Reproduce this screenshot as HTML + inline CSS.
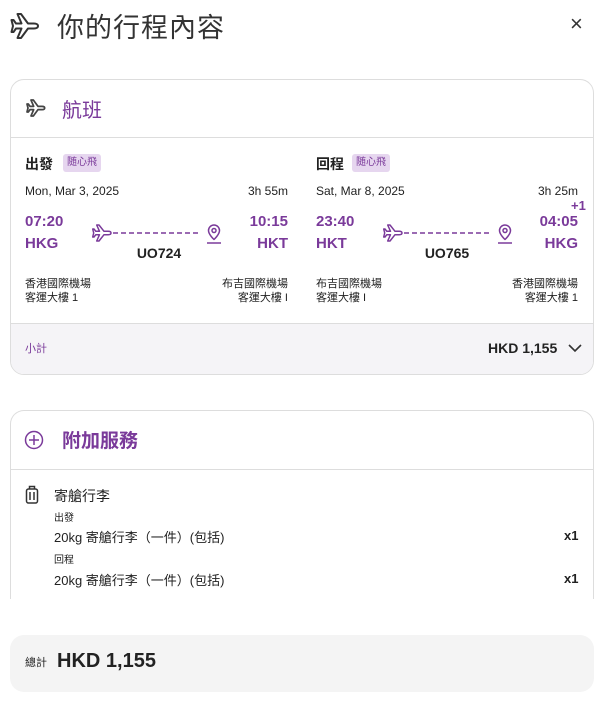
<!DOCTYPE html>
<html><head><meta charset="utf-8"><style>
*{margin:0;padding:0;box-sizing:border-box}
body{width:600px;height:706px;background:#fff;font-family:"Liberation Sans","Noto Sans CJK TC",sans-serif;color:#222;position:relative;overflow:hidden}
.a{position:absolute;white-space:nowrap}
.p{color:#7a3a9a}
.b{font-weight:bold}
.card{position:absolute;left:10px;width:584px;border:1px solid #ddd;border-radius:14px;background:#fff;overflow:hidden}
.badge{position:absolute;background:#e6d6ef;color:#7a3a9a;font-size:10px;border-radius:3px;padding:2px 4px;line-height:14px}
.sm{font-size:11px;line-height:14px}
</style></head><body>
<svg class="a" style="left:9px;top:11px" width="32" height="30" viewBox="0 0 32 30" fill="none" stroke="#333" stroke-width="2" stroke-linejoin="round"><path d="M29 15c0-1.5-1.5-2.5-4-2.5H19L12 3H8.5l4 9.5H7L4.5 9H2.5l1.5 6-1.5 6h2L7 17.5h5.5l-4 9.5H12l7-9.5h6c2.5 0 4-1 4-2.5z"/></svg>
<div class="a" style="left:57px;top:6px;font-size:27px;color:#333;letter-spacing:1px">你的行程內容</div>
<div class="a" style="left:570px;top:11px;font-size:22px;color:#333">×</div>

<div class="card" style="top:79px;height:296px">
  <svg class="a" style="left:14px;top:18px" width="22" height="20" viewBox="0 0 32 30" fill="none" stroke="#444" stroke-width="2.6" stroke-linejoin="round"><path d="M29 15c0-1.5-1.5-2.5-4-2.5H19L12 3H8.5l4 9.5H7L4.5 9H2.5l1.5 6-1.5 6h2L7 17.5h5.5l-4 9.5H12l7-9.5h6c2.5 0 4-1 4-2.5z"/></svg>
  <div class="a p" style="left:51px;top:14px;font-size:20px">航班</div>
  <div class="a" style="left:0;top:57px;width:584px;border-top:1px solid #ddd"></div>

  <div class="a b" style="left:14px;top:74px;font-size:14px">出發</div>
  <div class="badge" style="left:52px;top:74px">随心飛</div>
  <div class="a" style="left:14px;top:104px;font-size:12px">Mon, Mar 3, 2025</div>
  <div class="a" style="left:200px;width:77px;text-align:right;top:104px;font-size:12px">3h 55m</div>
  <div class="a p b" style="left:14px;top:133px;font-size:15px">07:20</div>
  <div class="a p b" style="left:14px;top:155px;font-size:15px">HKG</div>
  <div class="a p b" style="left:200px;width:77px;text-align:right;top:133px;font-size:15px">10:15</div>
  <div class="a p b" style="left:200px;width:77px;text-align:right;top:155px;font-size:15px">HKT</div>
  <svg class="a" style="left:80px;top:142px" width="132" height="24" viewBox="0 0 132 24" fill="none" stroke="#7a3a9a" stroke-width="1.5" stroke-linejoin="round"><path d="M20 11c0-1-1-1.7-2.8-1.7H13L8 3H5.7l2.8 6.3H4.8L3 7H1.7l1 4-1 4H3l1.8-2.3h3.7L5.7 19H8l5-6.3h4.2c1.8 0 2.8-.7 2.8-1.7z"/><path d="M22 11h86" stroke-dasharray="5 3"/><path d="M123 3a5.5 5.5 0 0 1 5.5 5.5c0 4-5.5 9-5.5 9s-5.5-5-5.5-9A5.5 5.5 0 0 1 123 3z"/><circle cx="123" cy="8.5" r="2"/><path d="M116 21h14"/></svg>
  <div class="a b" style="left:100px;width:96px;text-align:center;top:165px;font-size:14px">UO724</div>
  <div class="a sm" style="left:14px;top:197px">香港國際機場</div>
  <div class="a sm" style="left:14px;top:211px">客運大樓 1</div>
  <div class="a sm" style="left:180px;width:97px;text-align:right;top:197px">布吉國際機場</div>
  <div class="a sm" style="left:180px;width:97px;text-align:right;top:211px">客運大樓 I</div>

  <div class="a b" style="left:305px;top:74px;font-size:14px">回程</div>
  <div class="badge" style="left:341px;top:74px">随心飛</div>
  <div class="a" style="left:305px;top:104px;font-size:12px">Sat, Mar 8, 2025</div>
  <div class="a" style="left:490px;width:77px;text-align:right;top:104px;font-size:12px">3h 25m</div>
  <div class="a p b" style="left:560px;top:118px;font-size:13px">+1</div>
  <div class="a p b" style="left:305px;top:133px;font-size:15px">23:40</div>
  <div class="a p b" style="left:305px;top:155px;font-size:15px">HKT</div>
  <div class="a p b" style="left:490px;width:77px;text-align:right;top:133px;font-size:15px">04:05</div>
  <div class="a p b" style="left:490px;width:77px;text-align:right;top:155px;font-size:15px">HKG</div>
  <svg class="a" style="left:371px;top:142px" width="132" height="24" viewBox="0 0 132 24" fill="none" stroke="#7a3a9a" stroke-width="1.5" stroke-linejoin="round"><path d="M20 11c0-1-1-1.7-2.8-1.7H13L8 3H5.7l2.8 6.3H4.8L3 7H1.7l1 4-1 4H3l1.8-2.3h3.7L5.7 19H8l5-6.3h4.2c1.8 0 2.8-.7 2.8-1.7z"/><path d="M22 11h86" stroke-dasharray="5 3"/><path d="M123 3a5.5 5.5 0 0 1 5.5 5.5c0 4-5.5 9-5.5 9s-5.5-5-5.5-9A5.5 5.5 0 0 1 123 3z"/><circle cx="123" cy="8.5" r="2"/><path d="M116 21h14"/></svg>
  <div class="a b" style="left:388px;width:96px;text-align:center;top:165px;font-size:14px">UO765</div>
  <div class="a sm" style="left:305px;top:197px">布吉國際機場</div>
  <div class="a sm" style="left:305px;top:211px">客運大樓 I</div>
  <div class="a sm" style="left:470px;width:97px;text-align:right;top:197px">香港國際機場</div>
  <div class="a sm" style="left:470px;width:97px;text-align:right;top:211px">客運大樓 1</div>

  <div class="a" style="left:0;top:243px;width:584px;height:53px;background:#f5f4f7;border-top:1px solid #ddd"></div>
  <div class="a p sm" style="left:14px;top:262px">小計</div>
  <div class="a b" style="left:477px;top:260px;font-size:14px">HKD 1,155</div>
  <svg class="a" style="left:557px;top:263px" width="14" height="10" viewBox="0 0 14 10" fill="none" stroke="#333" stroke-width="1.6"><path d="M1 2l6 6 6-6"/></svg>
</div>

<div class="card" style="top:410px;height:220px;border-bottom:none;border-radius:14px 14px 0 0">
  <svg class="a" style="left:13px;top:19px" width="20" height="20" viewBox="0 0 20 20" fill="none" stroke="#7a3a9a" stroke-width="1.5"><circle cx="10" cy="10" r="8.5"/><path d="M10 5v10M5 10h10"/></svg>
  <div class="a p b" style="left:51px;top:15px;font-size:19px">附加服務</div>
  <div class="a" style="left:0;top:58px;width:584px;border-top:1px solid #ddd"></div>
  <svg class="a" style="left:14px;top:74px" width="14" height="20" viewBox="0 0 14 20" fill="none" stroke="#333" stroke-width="1.5"><rect x="1.5" y="4" width="11" height="14" rx="2"/><path d="M4.5 4V1.5h5V4M5 7v8M9 7v8"/></svg>
  <div class="a" style="left:43px;top:75px;font-size:14px">寄艙行李</div>
  <div class="a" style="left:43px;top:98px;font-size:10px">出發</div>
  <div class="a" style="left:43px;top:116px;font-size:13px">20kg 寄艙行李（一件）(包括)</div>
  <div class="a b" style="left:553px;top:117px;font-size:13px">x1</div>
  <div class="a" style="left:43px;top:140px;font-size:10px">回程</div>
  <div class="a" style="left:43px;top:159px;font-size:13px">20kg 寄艙行李（一件）(包括)</div>
  <div class="a b" style="left:553px;top:160px;font-size:13px">x1</div>
</div>
<div class="a" style="left:0;top:599px;width:600px;height:36px;background:#fff"></div>

<div class="a" style="left:10px;top:635px;width:584px;height:57px;background:#f4f4f4;border-radius:14px"></div>
<div class="a sm" style="left:25px;top:656px">總計</div>
<div class="a b" style="left:57px;top:650px;font-size:20px">HKD 1,155</div>
</body></html>
